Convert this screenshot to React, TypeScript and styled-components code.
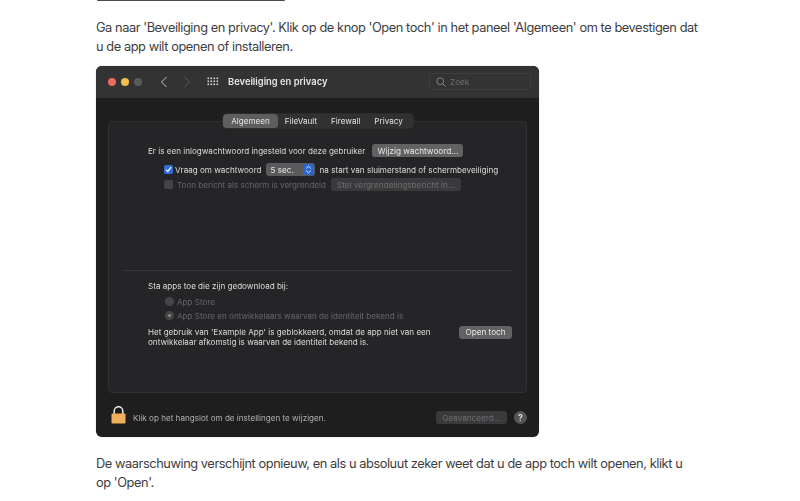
import React from 'react';
import styled, { createGlobalStyle } from 'styled-components';

const GlobalStyle = createGlobalStyle`
  html, body {
    margin: 0;
    padding: 0;
    background: #ffffff;
  }
  body {
    font-family: Inter, "Noto Sans", sans-serif;
    overflow: hidden;
  }
`;

const Page = styled.div`
  width: 800px;
  height: 501px;
  overflow: hidden;
  padding-left: 96px;
  box-sizing: border-box;
`;

const PreviousImage = styled.div`
  width: 188px;
  height: 1px;
  margin-left: 1px;
  background: #4a4a4a;
  border-radius: 0 0 6px 6px;
`;

const Paragraph = styled.p<{ $top: number }>`
  width: 604px;
  margin: ${({ $top }) => $top}px 0 0;
  font-size: 12.8px;
  line-height: 19.4px;
  letter-spacing: -0.43px;
  color: #3d3d3f;
`;

const Window = styled.div`
  width: 443px;
  height: 371px;
  margin-top: 9px;
  display: flex;
  flex-direction: column;
  background: #1e1e1e;
  border-radius: 6px;
  overflow: hidden;
  box-shadow: 0 0 1px rgba(0, 0, 0, 0.5);
  filter: blur(0.25px);
`;

const TitleBar = styled.div`
  height: 32px;
  flex: none;
  display: flex;
  align-items: center;
  padding: 0 8px 0 12px;
  background: #333333;
  box-sizing: border-box;
`;

const Light = styled.span<{ $color: string }>`
  width: 8px;
  height: 8px;
  margin-right: 5px;
  border-radius: 50%;
  background: ${({ $color }) => $color};
`;

const NavIcon = styled.svg<{ $ml: number }>`
  flex: none;
  display: block;
  margin-left: ${({ $ml }) => $ml}px;
`;

const WindowTitle = styled.span`
  margin-left: 9px;
  font-size: 9.4px;
  font-weight: 600;
  color: #e6e6e6;
`;

const SearchBox = styled.div`
  width: 102px;
  height: 17px;
  margin-left: auto;
  display: flex;
  align-items: center;
  gap: 4px;
  padding-left: 6px;
  box-sizing: border-box;
  border: 1px solid #3e3e3e;
  border-radius: 3px;
  font-size: 8.2px;
  color: #6e6e6e;
`;

const Content = styled.div`
  flex: 1;
  display: flex;
  flex-direction: column;
  padding: 16px 12px 0;
`;

const Tabs = styled.div`
  align-self: center;
  position: relative;
  z-index: 1;
  display: flex;
  margin-bottom: -7px;
  margin-left: 1px;
  padding-right: 3px;
  height: 14px;
  background: #313131;
  border-radius: 4px;
  box-shadow: 0 0 0 0.5px #3a3a3a;
`;

const Tab = styled.span<{ $active?: boolean }>`
  display: flex;
  align-items: center;
  padding: 0 ${({ $active }) => ($active ? 8 : 7)}px;
  font-size: 8.1px;
  color: #e4e4e4;
  border-radius: 4px;
  background: ${({ $active }) => ($active ? '#5e5e5e' : 'transparent')};
`;

const Panel = styled.div`
  height: 272px;
  box-sizing: border-box;
  padding-top: 22px;
  background: #252527;
  border: 1px solid #313133;
  border-radius: 4px;
`;

const Section = styled.div`
  padding: 0 14px 0 39px;
`;

const Row = styled.div<{ $indent?: number; $mt?: number; $dim?: boolean }>`
  display: flex;
  align-items: center;
  height: 14px;
  margin: ${({ $mt }) => $mt ?? 0}px 0 0 ${({ $indent }) => $indent ?? 0}px;
  font-size: 8.1px;
  white-space: nowrap;
  color: ${({ $dim }) => ($dim ? '#66666a' : '#dcdcdc')};
`;

const MacButton = styled.span<{ $dim?: boolean; $width: number; $ml?: number }>`
  flex: none;
  width: ${({ $width }) => $width}px;
  height: 13px;
  margin-left: ${({ $ml }) => $ml ?? 0}px;
  display: flex;
  align-items: center;
  justify-content: center;
  border-radius: 3px;
  font-size: 8.2px;
  background: ${({ $dim }) => ($dim ? '#3a3a3c' : '#626264')};
  color: ${({ $dim }) => ($dim ? '#6e6e70' : '#e8e8e8')};
`;

const CheckBox = styled.span<{ $on?: boolean }>`
  flex: none;
  width: 9px;
  height: 9px;
  margin-right: ${({ $on }) => ($on ? 2 : 4)}px;
  display: flex;
  align-items: center;
  justify-content: center;
  border-radius: 2px;
  background: ${({ $on }) => ($on ? '#2d6fd8' : '#444446')};
`;

const Stepper = styled.span`
  flex: none;
  width: 49px;
  height: 13px;
  margin: 0 5px 0 4px;
  display: flex;
  align-items: center;
  justify-content: space-between;
  padding: 0 1px 0 5px;
  box-sizing: border-box;
  border-radius: 3px;
  background: #5a5a5c;
  color: #e8e8e8;
`;

const StepperArrows = styled.span`
  width: 11px;
  height: 11px;
  display: flex;
  align-items: center;
  justify-content: center;
  border-radius: 2.5px;
  background: #2a66cf;
`;

const Divider = styled.div`
  height: 1px;
  margin: 78px 14px 0;
  background: #39393b;
`;

const Radio = styled.span<{ $on?: boolean }>`
  flex: none;
  width: 9px;
  height: 9px;
  margin-right: 3px;
  display: flex;
  align-items: center;
  justify-content: center;
  border-radius: 50%;
  background: #464648;

  &::after {
    content: '';
    width: 3px;
    height: 3px;
    border-radius: 50%;
    background: ${({ $on }) => ($on ? '#8a8a8c' : 'transparent')};
  }
`;

const BlockedRow = styled.div`
  display: flex;
  justify-content: space-between;
  align-items: flex-start;
  margin-top: 3px;
`;

const BlockedText = styled.div`
  font-size: 8.1px;
  line-height: 10.5px;
  margin-top: 1px;
  color: #dcdcdc;
`;

const Footer = styled.div`
  flex: 1;
  display: flex;
  align-items: center;
  padding: 6px 0 0 3px;
  font-size: 8.1px;
  color: #b0b0b0;
`;

const LockIcon = styled.svg`
  flex: none;
  margin-bottom: 5px;
`;

const FooterText = styled.span`
  margin-left: 7px;
`;

const Help = styled.span`
  width: 13px;
  height: 13px;
  margin-left: 7px;
  display: flex;
  align-items: center;
  justify-content: center;
  border-radius: 50%;
  background: #555557;
  color: #e0e0e0;
  font-size: 9px;
  font-weight: 600;
`;

const Spacer = styled.span`
  flex: 1;
`;

export default function App() {
  return (
    <Page>
      <GlobalStyle />
      <PreviousImage />
      <Paragraph $top={17}>
        Ga naar 'Beveiliging en privacy'. Klik op de knop 'Open toch' in het paneel 'Algemeen' om te bevestigen dat u de app wilt openen of installeren.
      </Paragraph>
      <Window>
        <TitleBar>
          <Light $color="#ed6a5e" />
          <Light $color="#f4bf4f" />
          <Light $color="#5b5b5b" />
          <NavIcon $ml={13} width="8" height="12" viewBox="0 0 8 12">
            <path d="M6.5 1 L1.5 6 L6.5 11" fill="none" stroke="#c4c4c4" strokeWidth="1" />
          </NavIcon>
          <NavIcon $ml={15} width="8" height="12" viewBox="0 0 8 12">
            <path d="M1.5 1 L6.5 6 L1.5 11" fill="none" stroke="#5c5c5c" strokeWidth="1" />
          </NavIcon>
          <NavIcon $ml={16} width="12" height="9" viewBox="0 0 12 9">
            {[0, 1, 2].map((r) =>
              [0, 1, 2, 3].map((c) => (
                <rect key={`${r}-${c}`} x={0.5 + c * 3} y={0.5 + r * 3} width="1.6" height="1.6" fill="#d8d8d8" />
              ))
            )}
          </NavIcon>
          <WindowTitle>Beveiliging en privacy</WindowTitle>
          <SearchBox>
            <svg width="10" height="10" viewBox="0 0 10 10">
              <circle cx="4.2" cy="4.2" r="3.4" fill="none" stroke="#9a9a9a" strokeWidth="0.8" />
              <path d="M6.7 6.7 L9.6 9.6" stroke="#9a9a9a" strokeWidth="0.8" />
            </svg>
            Zoek
          </SearchBox>
        </TitleBar>
        <Content>
          <Tabs>
            <Tab $active>Algemeen</Tab>
            <Tab>FileVault</Tab>
            <Tab>Firewall</Tab>
            <Tab>Privacy</Tab>
          </Tabs>
          <Panel>
            <Section>
              <Row>
                Er is een inlogwachtwoord ingesteld voor deze gebruiker
                <MacButton $width={91} $ml={7}>Wijzig wachtwoord...</MacButton>
              </Row>
              <Row $indent={16} $mt={5}>
                <CheckBox $on>
                  <svg width="7" height="7" viewBox="0 0 7 7">
                    <path d="M1 3.6 L2.8 5.6 L6 1.2" fill="none" stroke="#fff" strokeWidth="1.2" />
                  </svg>
                </CheckBox>
                Vraag om wachtwoord
                <Stepper>
                  5 sec.
                  <StepperArrows>
                    <svg width="7" height="9" viewBox="0 0 7 9">
                      <path d="M1.2 3.4 L3.5 1.2 L5.8 3.4 M1.2 5.6 L3.5 7.8 L5.8 5.6" fill="none" stroke="#fff" strokeWidth="0.9" />
                    </svg>
                  </StepperArrows>
                </Stepper>
                na start van sluimerstand of schermbeveiliging
              </Row>
              <Row $indent={16} $mt={1} $dim>
                <CheckBox />
                Toon bericht als scherm is vergrendeld
                <MacButton $dim $width={130} $ml={5}>Stel vergrendelingsbericht in...</MacButton>
              </Row>
            </Section>
            <Divider />
            <Section>
              <Row $mt={8}>Sta apps toe die zijn gedownload bij:</Row>
              <Row $indent={17} $mt={2} $dim>
                <Radio />
                App Store
              </Row>
              <Row $indent={17} $dim>
                <Radio $on />
                App Store en ontwikkelaars waarvan de identiteit bekend is
              </Row>
              <BlockedRow>
                <BlockedText>
                  Het gebruik van 'Example App' is geblokkeerd, omdat de app niet van een
                  <br />
                  ontwikkelaar afkomstig is waarvan de identiteit bekend is.
                </BlockedText>
                <MacButton $width={53}>Open toch</MacButton>
              </BlockedRow>
            </Section>
          </Panel>
          <Footer>
            <LockIcon width="15" height="18" viewBox="0 0 15 18">
              <path d="M3.2 8 V5 a4.3 4.3 0 0 1 8.6 0 V8" fill="none" stroke="#e8e8e8" strokeWidth="1.5" />
              <rect x="0.5" y="7.5" width="14" height="10" rx="1" fill="#eeb05c" />
            </LockIcon>
            <FooterText>Klik op het hangslot om de instellingen te wijzigen.</FooterText>
            <Spacer />
            <MacButton $dim $width={71}>Geavanceerd...</MacButton>
            <Help>?</Help>
          </Footer>
        </Content>
      </Window>
      <Paragraph $top={17}>
        De waarschuwing verschijnt opnieuw, en als u absoluut zeker weet dat u de app toch wilt openen, klikt u op 'Open'.
      </Paragraph>
    </Page>
  );
}
